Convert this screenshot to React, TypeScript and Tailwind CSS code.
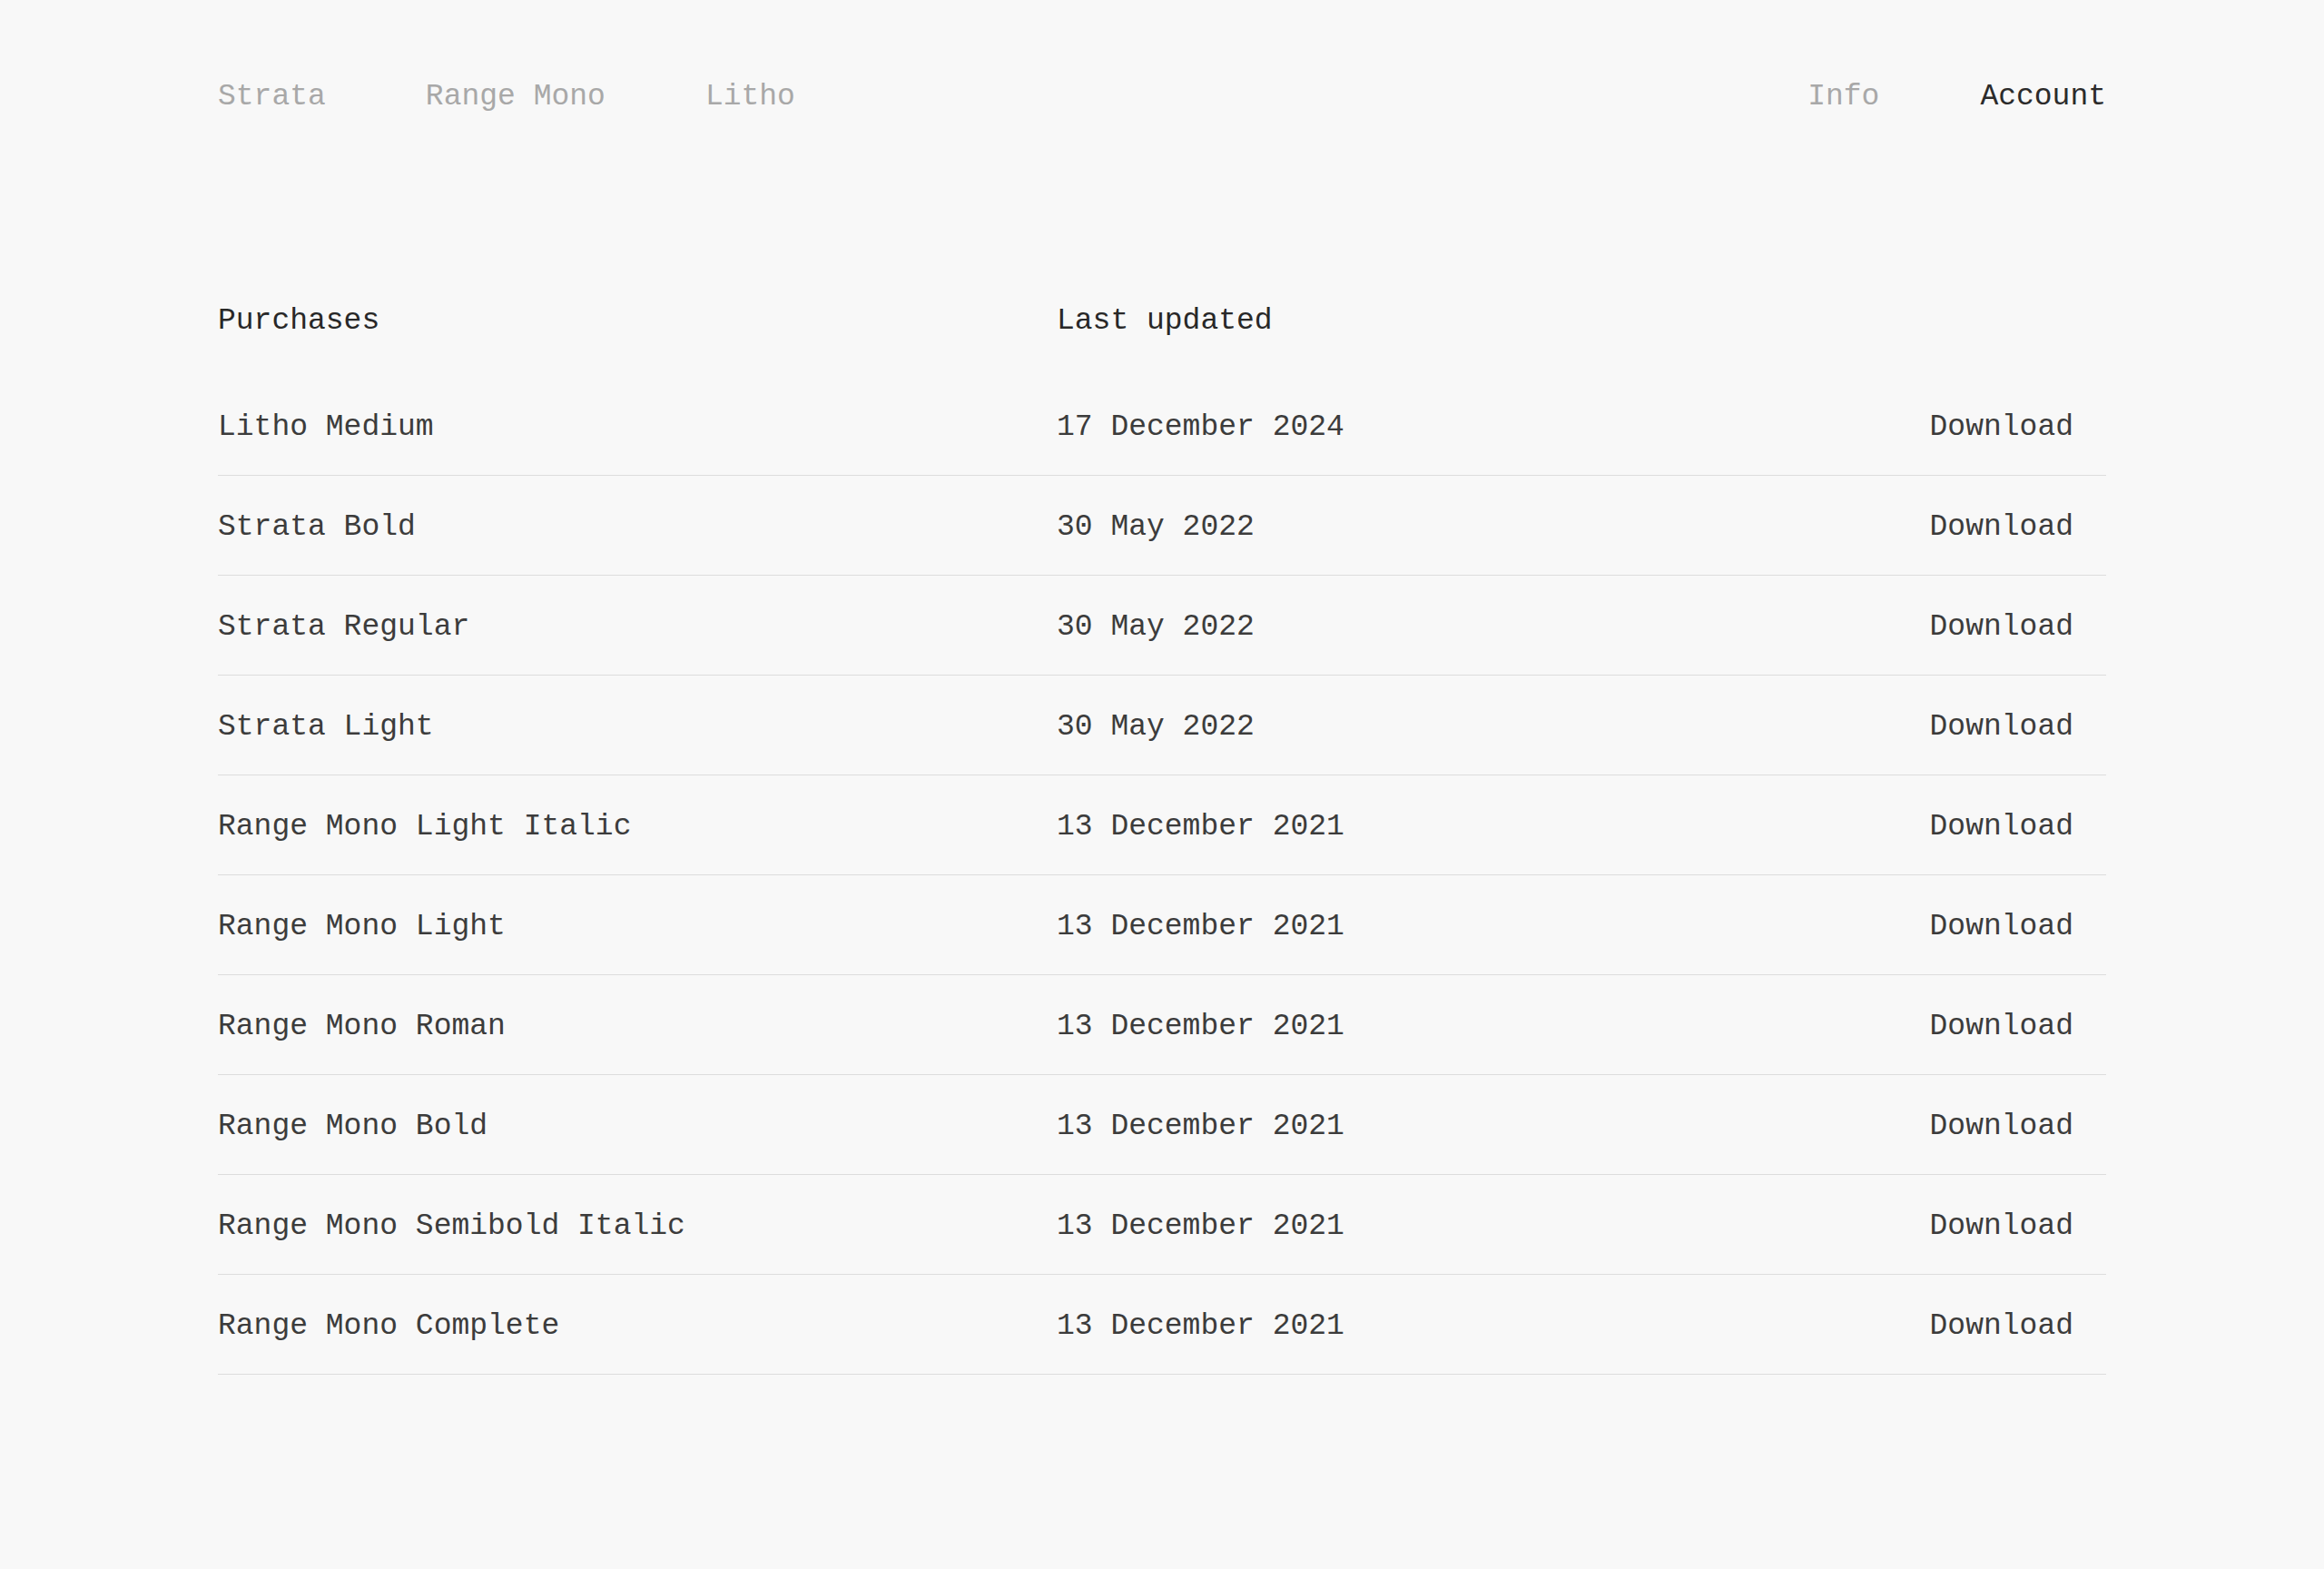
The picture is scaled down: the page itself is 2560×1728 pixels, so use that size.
const purchases = [
  { name: "Litho Medium", date: "17 December 2024" },
  { name: "Strata Bold", date: "30 May 2022" },
  { name: "Strata Regular", date: "30 May 2022" },
  { name: "Strata Light", date: "30 May 2022" },
  { name: "Range Mono Light Italic", date: "13 December 2021" },
  { name: "Range Mono Light", date: "13 December 2021" },
  { name: "Range Mono Roman", date: "13 December 2021" },
  { name: "Range Mono Bold", date: "13 December 2021" },
  { name: "Range Mono Semibold Italic", date: "13 December 2021" },
  { name: "Range Mono Complete", date: "13 December 2021" },
];

const NavLink = ({ label, active }: { label: string; active?: boolean }) => (
  <a href="#" className={active ? "text-[#2b2b2b]" : "text-[#a8a8a8]"}>
    {label}
  </a>
);

export default function App() {
  return (
    <div
      className="min-h-[1728px] bg-[#f8f8f8] px-[240px] text-[33px] leading-[40px] text-[#3c3c3c]"
      style={{ fontFamily: '"Liberation Mono", "DejaVu Sans Mono", monospace' }}
    >
      <nav className="flex items-center justify-between pt-[87px]">
        <div className="flex gap-[110px]">
          <NavLink label="Strata" />
          <NavLink label="Range Mono" />
          <NavLink label="Litho" />
        </div>
        <div className="flex gap-[111px]">
          <NavLink label="Info" />
          <NavLink label="Account" active />
        </div>
      </nav>

      <section className="mt-[207px]">
        <div className="grid grid-cols-[924px_1fr] pb-[40px] text-[#282828]">
          <span>Purchases</span>
          <span>Last updated</span>
        </div>
        <div>
          {purchases.map((p) => (
            <div
              key={p.name}
              className="grid h-[110px] grid-cols-[924px_1fr_auto] items-center border-b border-[#dddddd] pt-[5px]"
            >
              <span>{p.name}</span>
              <span>{p.date}</span>
              <a href="#" className="pr-[36px]">
                Download
              </a>
            </div>
          ))}
        </div>
      </section>
    </div>
  );
}
